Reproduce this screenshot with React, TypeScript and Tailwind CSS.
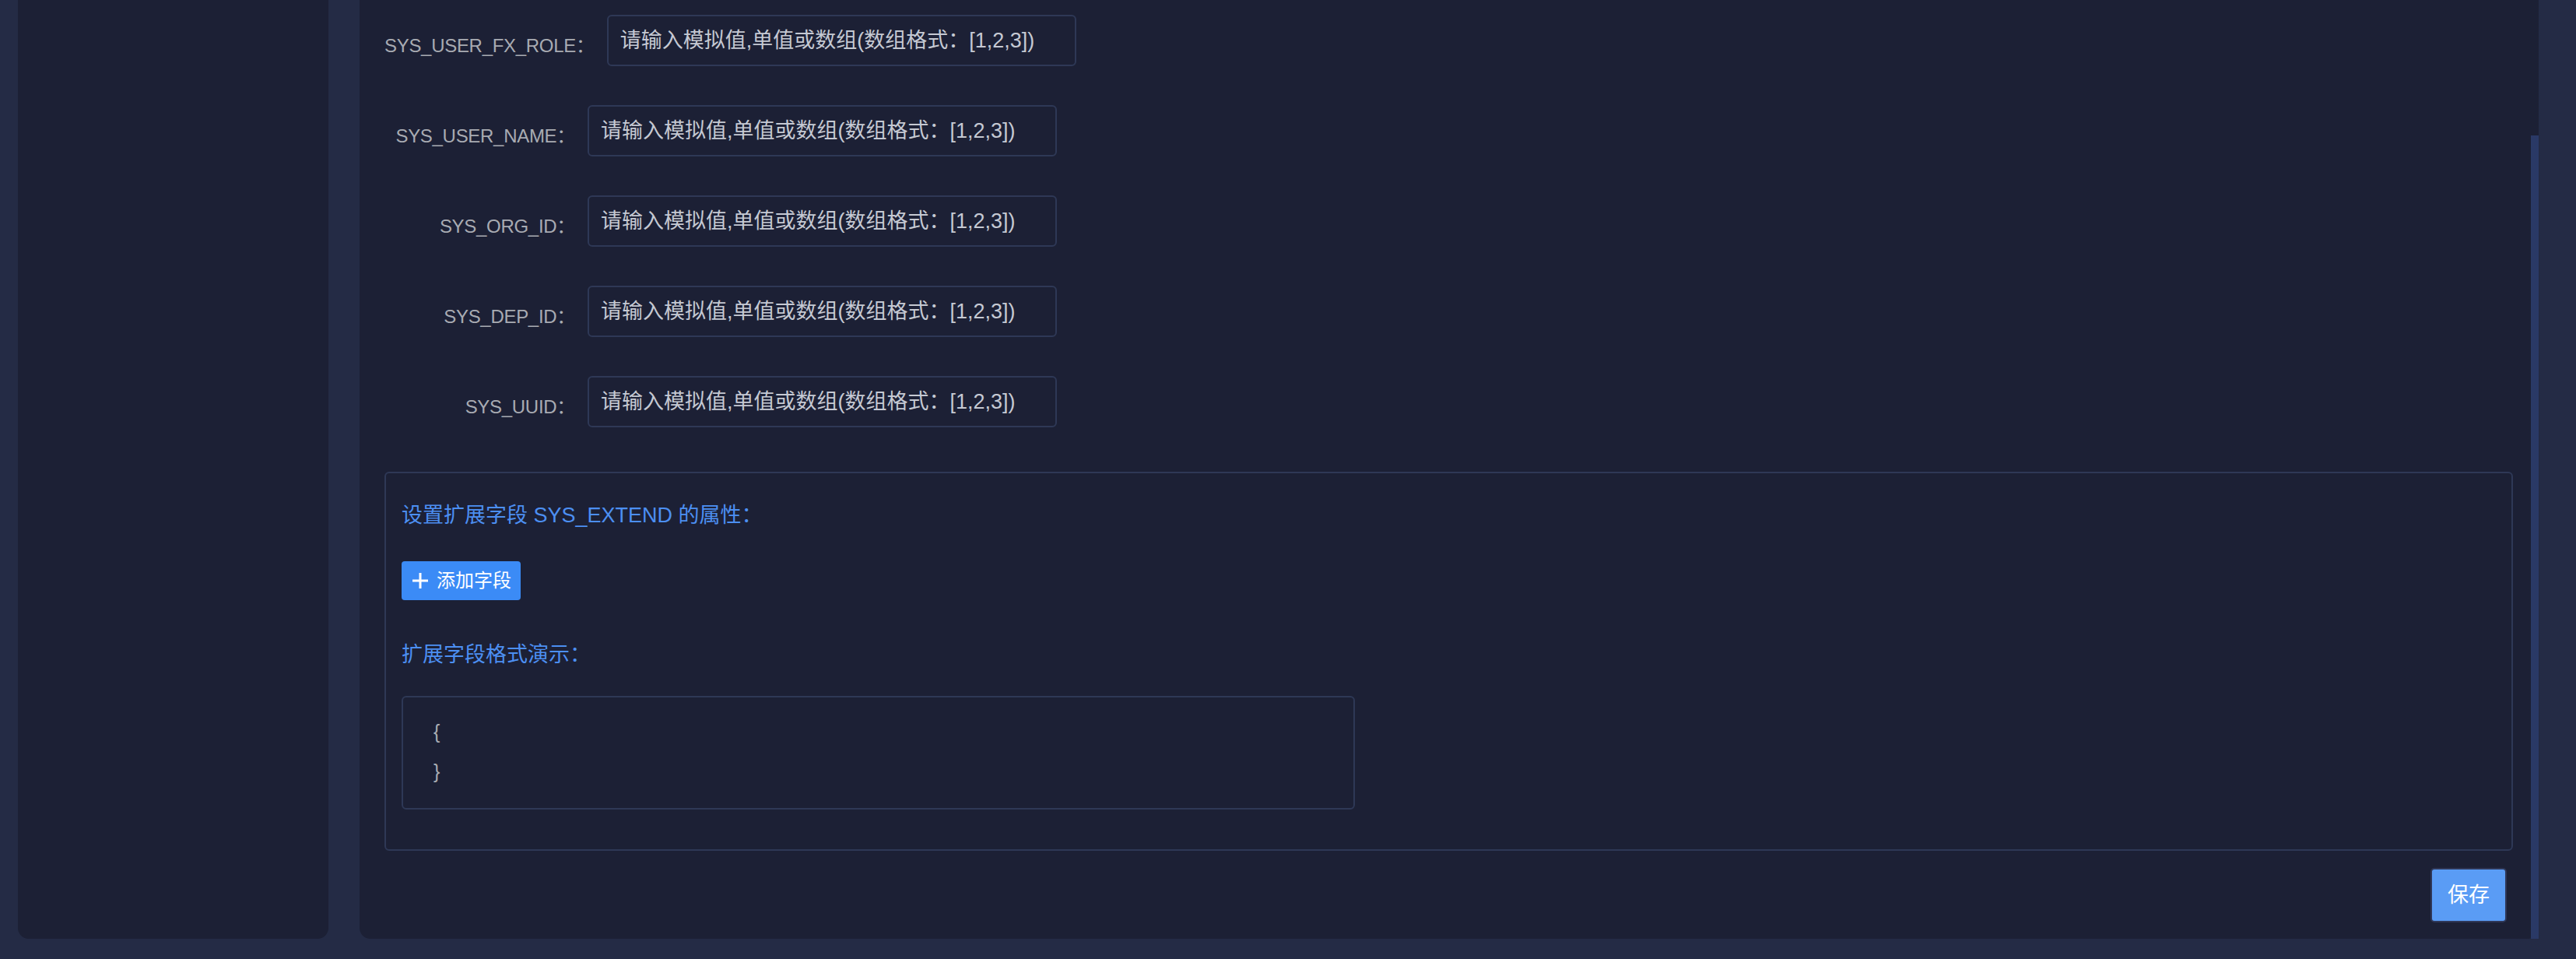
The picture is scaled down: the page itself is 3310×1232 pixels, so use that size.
const fields = [
  "SYS_USER_FX_ROLE",
  "SYS_USER_NAME",
  "SYS_ORG_ID",
  "SYS_DEP_ID",
  "SYS_UUID",
];

const placeholder = "请输入模拟值,单值或数组(数组格式：[1,2,3])";

function FieldRow({ name }: { name: string }) {
  return (
    <div className="flex items-start">
      <label className="min-w-[261px] shrink-0 pr-[16px] pt-[20px] text-right text-[24px] leading-[40px] tracking-[-0.3px] text-[#a8abb2]">
        {name}：
      </label>
      <input
        className="h-[66px] w-[603px] rounded-[6px] border-2 border-[#2e3856] bg-transparent px-[15px] text-[27px] text-[#c5c9d3] outline-none placeholder:text-[#c5c9d3]"
        placeholder={placeholder}
      />
    </div>
  );
}

export default function App() {
  return (
    <div
      className="flex h-[1232px] w-[3310px] gap-[40px] overflow-hidden bg-[#242b45] pb-[26px] pl-[23px] pr-[48px]"
      style={{ fontFamily: '"Liberation Sans", "Noto Sans CJK SC", sans-serif' }}
    >
      {/* sidebar */}
      <aside className="w-[399px] shrink-0 rounded-b-[14px] bg-[#1c2035]" />

      {/* main panel */}
      <main className="relative flex flex-1 flex-col rounded-b-[14px] bg-[#1c2035] pl-[32px] pr-[33px] pt-[19px]">
        <div className="flex flex-col gap-[50px]">
          {fields.map((f) => (
            <FieldRow key={f} name={f} />
          ))}
        </div>

        <section className="mt-[57px] flex h-[487px] flex-col items-start rounded-[6px] border-2 border-[#2e3856] px-[20px] pt-[36px]">
          <p className="text-[27px] leading-[36px] text-[#4c8ff2]">
            设置扩展字段 SYS_EXTEND 的属性：
          </p>
          <button className="mt-[41px] flex h-[50px] items-center gap-[10px] rounded-[4px] bg-[#3b8bf6] pl-[13px] pr-[12px] text-[24px] text-white">
            <svg width="22" height="22" viewBox="0 0 22 22" fill="none" stroke="currentColor" strokeWidth="3">
              <path d="M11 1v20M1 11h20" />
            </svg>
            添加字段
          </button>
          <p className="mt-[52px] text-[27px] leading-[36px] text-[#4c8ff2]">扩展字段格式演示：</p>
          <div className="mt-[35px] h-[146px] w-[1225px] rounded-[6px] border-2 border-[#2e3856] pl-[39px] pt-[19px] text-[25px] leading-[51px] text-[#a9acb3]">
            <div>{"{"}</div>
            <div>{"}"}</div>
          </div>
        </section>

        <div className="flex justify-end pr-[8px] pt-[22px]">
          <button className="h-[70px] w-[98px] rounded-[5px] border-2 border-[#2f3757] bg-[#5a9cf5] text-[27px] text-white">
            保存
          </button>
        </div>

        {/* scrollbar thumb */}
        <div className="absolute bottom-0 right-0 top-[174px] w-[10px] bg-[#2a3966]" />
      </main>
    </div>
  );
}
